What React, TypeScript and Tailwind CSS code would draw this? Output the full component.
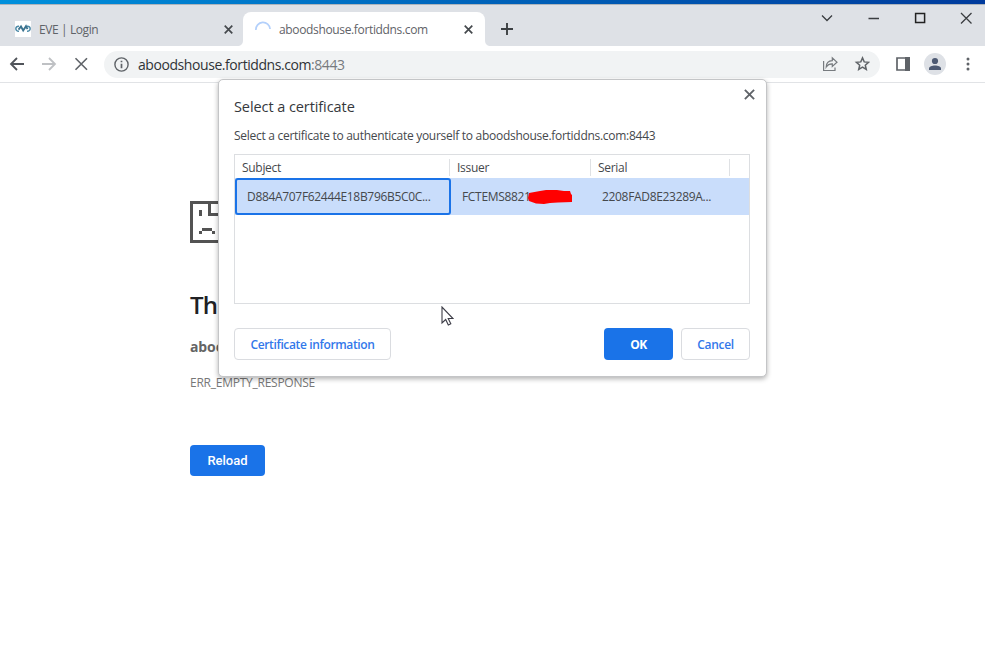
import React from "react";

function Cross({ size, width, color }: { size: number; width: number; color: string }) {
  return (
    <svg width={size} height={size} viewBox="0 0 10 10" className="block" stroke={color} strokeWidth={width} fill="none">
      <path d="M.8.8 9.2 9.2M9.2.8.8 9.2" />
    </svg>
  );
}

function TabStrip() {
  return (
    <div className="flex h-[41px] items-end bg-[#dee1e6]">
      <div className="flex h-[34px] w-[243px] items-center pl-[15px]">
        <svg width="16" height="16" viewBox="0 0 16 16" className="bg-white" fill="none" stroke="#4c8aa8" strokeWidth="1.5">
          <path d="M4 5.3C-.2 4.8-.2 10.5 4 10.3M12 5.3c4.200-.5 4.200 5.200 0 5" />
          <path d="M3.500 8.700 6 5.500l2.200 4L11 5.200l1.500 3" strokeWidth="1.900" stroke="#3b738f" />
        </svg>
        <span className="ml-2 w-[177px] pt-px text-[12px] tracking-[-0.4px] text-[#5f6368]">EVE | Login</span>
        <span className="ml-2"><Cross size={9} width={1.9} color="#45494d" /></span>
      </div>
      <div className="relative flex h-[34px] w-[242px] items-center rounded-t-[8px] bg-white pl-3">
        <svg width="6" height="6" viewBox="0 0 6 6" className="absolute bottom-0 -left-[6px]" fill="white"><path d="M6 0v6H0C4 6 6 4 6 0z" /></svg>
        <svg width="6" height="6" viewBox="0 0 6 6" className="absolute -right-[6px] bottom-0" fill="white"><path d="M0 0v6h6C2 6 0 4 0 0z" /></svg>
        <svg width="16" height="16" viewBox="0 0 16 16" fill="none" stroke="#b3d0fb" strokeWidth="1.7">
          <path d="M.9 9A7.100 7.100 0 0 1 15.100 8" />
        </svg>
        <span className="ml-2 w-[177px] pt-px text-[12px] tracking-[-0.35px] text-[#5f6368]">aboodshouse.fortiddns.com</span>
        <span className="ml-2"><Cross size={9} width={1.9} color="#45494d" /></span>
      </div>
      <svg width="12" height="12" viewBox="0 0 12 12" className="mb-[11px] ml-[16px]" stroke="#3c4043" strokeWidth="1.9">
        <path d="M6 0v12M0 6h12" />
      </svg>
      <div className="ml-auto flex h-[41px] items-start pt-[7px] pr-[12px]">
        <svg width="152" height="12" viewBox="0 0 152 12" fill="none" stroke="#3a3d40" strokeWidth="1.300">
          <path d="M1 3.500 6 8.500 11 3.500M47.500 6.500H58" />
          <path d="M94.600 1.600h9v9h-9z" stroke="#222" strokeWidth="1.500" />
          <path d="M140 1l10.500 10.500M150.500 1 140 11.500" />
        </svg>
      </div>
    </div>
  );
}

function Toolbar() {
  return (
    <div className="flex h-[37px] items-center border-b border-[#e1e3e6] bg-white">
      <svg width="80" height="16" viewBox="0 0 80 16" className="ml-[9px]" fill="none" strokeWidth="1.800">
        <path d="M15 8H2M8 2 2 8l6 6" stroke="#50545a" />
        <path d="M33 8h13M40 2l6 6-6 6" stroke="#bfc1c4" />
        <path d="M66.500 2.200 78 13.700M78 2.200 66.500 13.700" stroke="#5f6368" strokeWidth="1.600" />
      </svg>
      <div className="ml-[15px] flex h-[27px] w-[776px] items-center rounded-full bg-[#f1f3f4] pl-[10px]">
        <svg width="15" height="15" viewBox="0 0 15 15" fill="none" stroke="#5f6368" strokeWidth="1.400">
          <circle cx="7.500" cy="7.500" r="6.600" />
          <path d="M7.500 6.700v4.500M7.500 3.700v1.600" strokeWidth="1.700" />
        </svg>
        <span className="ml-[9px] text-[14px] tracking-[-0.43px] text-[#303337]">aboodshouse.fortiddns.com<span className="text-[#777a7e]">:8443</span></span>
        <svg width="48" height="16" viewBox="0 0 48 16" className="mr-[10px] ml-auto" fill="none" stroke="#777b7f" strokeWidth="1.200">
          <path d="M1.600 5v9.500H13V11.500" />
          <path d="M4.200 11C4.300 6.800 6.300 4.800 10.300 4.600V1.800L15 6.200l-4.700 4.300V7.900C7.500 7.800 5.600 8.800 4.200 11Z" />
          <path d="m40.500 1.900 1.700 4 4.400.4-3.300 2.900 1 4.300-3.800-2.300-3.800 2.300 1-4.300-3.300-2.900 4.400-.4z" stroke="#606468" strokeWidth="1.500" />
        </svg>
      </div>
      <svg width="14" height="14" viewBox="0 0 14 14" className="ml-[16px]">
        <path d="M1 1h12v12H1z" fill="none" stroke="#5f6368" strokeWidth="1.700" />
        <path d="M9 0h5v14H9z" fill="#5f6368" />
      </svg>
      <div className="ml-[14px] flex size-[22px] items-center justify-center rounded-full bg-[#dee1e6]">
        <svg width="14" height="14" viewBox="0 0 14 14" fill="#4d5a73">
          <circle cx="7" cy="4" r="3.100" />
          <path d="M1 13v-1.500C1 9.500 4 8.500 7 8.500s6 1 6 3V13z" />
        </svg>
      </div>
      <svg width="4" height="14" viewBox="0 0 4 14" className="ml-[20px]" fill="#5f6368">
        <circle cx="2" cy="2" r="1.500" /><circle cx="2" cy="7" r="1.500" /><circle cx="2" cy="12" r="1.500" />
      </svg>
    </div>
  );
}

function ErrorPage() {
  return (
    <div className="flex flex-col items-start pt-[118px] pl-[190px]">
      <svg width="42" height="42" viewBox="0 0 42 42" fill="#535353">
        <path d="M0 0h30v3H3v36h36V12h3v30H0z" />
        <path d="M18 0h3v12h10v3H18zM9 9h3v6H9zM12 27h10v3H12zM9 30h3v3H9zM22 30h3v3h-3z" />
      </svg>
      <h1 className="mt-[45px] text-[24px] leading-[34px] font-semibold tracking-[-0.7px] text-[#202124]">Th</h1>
      <p className="mt-[14px] text-[14px] leading-[22px] font-bold tracking-[-0.1px] text-[#646464]">aboo</p>
      <p className="mt-[15px] text-[12px] leading-[20px] tracking-[-0.25px] text-[#777]">ERR_EMPTY_RESPONSE</p>
      <button className="mt-[52px] h-[31px] w-[75px] rounded-[4px] bg-[#1a73e8] font-['Roboto'] text-[13px] font-medium text-white">Reload</button>
    </div>
  );
}

function Divider() {
  return <span className="h-[17px] w-px bg-[#dfe1e4]" />;
}

function CertificateTable() {
  return (
    <div className="mt-[9px] h-[150px] w-[516px] border border-[#dcdee1] text-[12px] tracking-[-0.3px] text-[#45484c]">
      <div className="flex h-[23px] items-center pt-px">
        <span className="w-[214px] pt-px pl-[7px]">Subject</span>
        <Divider />
        <span className="w-[140px] pt-px pl-[7px]">Issuer</span>
        <Divider />
        <span className="w-[138px] pt-px pl-[7px]">Serial</span>
        <Divider />
      </div>
      <div className="flex h-[37px] items-center bg-[#c9ddfb] tracking-[-0.32px]">
        <span className="flex h-[37px] w-[216px] items-center rounded-[3px] border-2 border-[#1a73e8] pl-[10px]">D884A707F62444E18B796B5C0C...</span>
        <span className="relative w-[141px] pl-[11px]">
          FCTEMS8821
          <svg width="44" height="14" viewBox="0 0 44 14" className="absolute top-[2px] left-[77px]" fill="#f00">
            <path d="M1 3 12 1 18 0h11l7 1h6l1 3 1 1v7l-14 .5-8 .5-6 1-8-.5L1 11 0 8z" />
          </svg>
        </span>
        <span className="pl-[10px]">2208FAD8E23289A...</span>
      </div>
    </div>
  );
}

function CertificateDialog() {
  return (
    <div className="absolute top-[79px] left-[218px] h-[298px] w-[549px] rounded-[5px] border border-[#c4c5c7] bg-white px-[15px] shadow-[0_2px_5px_rgba(0,0,0,0.3)]">
      <span className="absolute top-[9px] right-[11px]"><Cross size={11} width={1.700} color="#5f6368" /></span>
      <h2 className="mt-[17px] text-[14.5px] leading-[20px] tracking-[-0.080px] text-[#35383c]">Select a certificate</h2>
      <p className="mt-[10px] text-[12px] leading-[18px] tracking-[-0.280px] text-[#45484c]">Select a certificate to authenticate yourself to aboodshouse.fortiddns.com:8443</p>
      <CertificateTable />
      <div className="mt-6 flex h-8 w-[516px] text-[12px] font-semibold tracking-[-0.3px]">
        <button className="w-[157px] rounded-[4px] border border-[#dadce0] pt-px tracking-[-0.36px] text-[#3278ea]">Certificate information</button>
        <button className="mr-2 ml-auto w-[69px] rounded-[4px] bg-[#1a73e8] pt-px font-bold tracking-[-0.5px] text-white">OK</button>
        <button className="w-[69px] rounded-[4px] border border-[#dadce0] pt-px text-[#3278ea]">Cancel</button>
      </div>
    </div>
  );
}

export default function App() {
  return (
    <div className="relative h-[646px] w-[990px] overflow-hidden bg-white font-['Open_Sans','Noto_Sans',sans-serif]">
      <div className="w-[985px]">
        <div className="h-1 bg-linear-to-r from-[#0090dc] via-[#0062b9] to-[#003b9d]" />
        <div className="h-px bg-[#aeb4bb]" />
        <TabStrip />
        <Toolbar />
      </div>
      <ErrorPage />
      <CertificateDialog />
      <svg width="13" height="20" viewBox="0 0 13 20" className="absolute top-[306px] left-[441px]" fill="white" stroke="#3c3c46" strokeWidth="1.100">
        <path d="M1 1v16l3.700-3.500 2.600 5.500 2.500-1.200-2.600-5.300H12z" />
      </svg>
    </div>
  );
}
